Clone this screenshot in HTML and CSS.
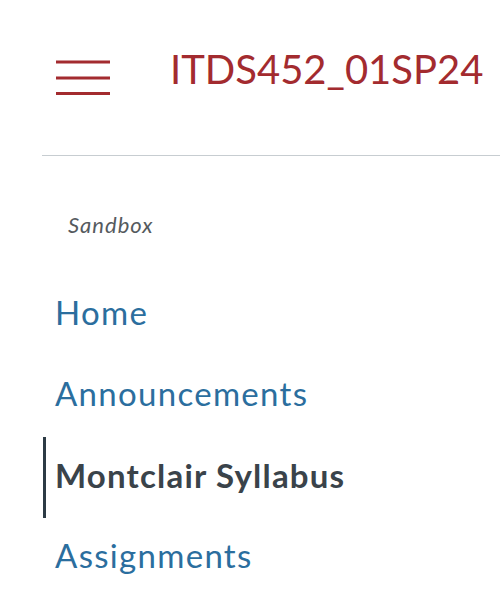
FILE: index.html
```html
<!DOCTYPE html>
<html lang="en">
<head>
<meta charset="utf-8">
<title>ITDS452_01SP24</title>
<link rel="stylesheet" href="styles.css">
</head>
<body>
<header class="header">
  <button class="hamburger" aria-label="Menu">
    <svg width="54" height="36" viewBox="0 0 54 36" aria-hidden="true">
      <rect x="0" y="0.5" width="54" height="3" fill="#a32b2f"/>
      <rect x="0" y="16.5" width="54" height="3" fill="#a32b2f"/>
      <rect x="0" y="32" width="54" height="3" fill="#a32b2f"/>
    </svg>
  </button>
  <h1 class="title">ITDS452_01SP24</h1>
</header>
<div class="divider"></div>
<nav class="course-nav">
  <div class="term">Sandbox</div>
  <ul class="nav-list">
    <li class="nav-item"><a href="#">Home</a></li>
    <li class="nav-item"><a href="#">Announcements</a></li>
    <li class="nav-item active"><a href="#">Montclair Syllabus</a></li>
    <li class="nav-item"><a href="#">Assignments</a></li>
  </ul>
</nav>
</body>
</html>
```
FILE: styles.css
```css
html, body {
  margin: 0;
  padding: 0;
  background: #ffffff;
  font-family: Lato, "Liberation Sans", sans-serif;
  overflow: hidden;
}

.header {
  display: flex;
  align-items: flex-start;
  box-sizing: border-box;
  height: 155px;
  padding: 45px 0 0 56px;
}

.hamburger {
  display: block;
  margin: 15px 0 0 0;
  padding: 0;
  border: 0;
  background: none;
  line-height: 0;
}

.title {
  margin: 0 0 0 60px;
  font-size: 40px;
  line-height: 48px;
  font-weight: 400;
  color: #a32b2f;
  white-space: nowrap;
}

.divider {
  margin-left: 42px;
  height: 1px;
  background: #c7cdd1;
}

.course-nav {
  padding-top: 56px;
}

.term {
  padding-left: 68px;
  font-size: 22px;
  line-height: 25px;
  font-style: italic;
  letter-spacing: 1px;
  color: #555a5e;
}

.nav-list {
  list-style: none;
  margin: 35px 0 0 0;
  padding: 0 0 0 43px;
}

.nav-item {
  box-sizing: border-box;
  height: 81px;
  padding: 21px 0 0 9px;
  border-left: 3px solid transparent;
}

.nav-item a {
  display: block;
  font-size: 33px;
  line-height: 38.4px;
  letter-spacing: 1.3px;
  color: #2b6e9e;
  text-decoration: none;
  white-space: nowrap;
}

.nav-item.active {
  margin-top: 3px;
  padding-top: 19px;
  border-left-color: #2d3b45;
}

.nav-item.active + .nav-item {
  padding-top: 18px;
}

.nav-item.active a {
  color: #3a434a;
  font-weight: 700;
  letter-spacing: 1.2px;
}
```
